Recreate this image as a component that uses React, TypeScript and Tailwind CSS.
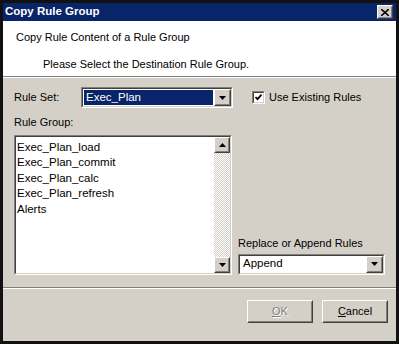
import React from 'react';

const font = { fontFamily: '"Liberation Sans", Arial, sans-serif' };

const ArrowDown = () => (
  <svg width="7" height="4" viewBox="0 0 7 4">
    <path d="M0 0h7L3.5 4z" fill="#000" />
  </svg>
);

const ArrowUp = () => (
  <svg width="7" height="4" viewBox="0 0 7 4">
    <path d="M0 4h7L3.5 0z" fill="#000" />
  </svg>
);

// classic raised 3d button face
const Raised = ({ className, children }: { className?: string; children?: React.ReactNode }) => (
  <div className={`border border-t-white border-l-white border-r-[#404040] border-b-[#404040] bg-[#d4d0c8] ${className ?? ''}`}>
    <div className="flex h-full w-full items-center justify-center border border-t-[#d4d0c8] border-l-[#d4d0c8] border-r-[#808080] border-b-[#808080]">
      {children}
    </div>
  </div>
);

// sunken field frame
const Sunken = ({ className, children }: { className?: string; children?: React.ReactNode }) => (
  <div className={`border border-t-[#808080] border-l-[#808080] border-r-white border-b-white ${className ?? ''}`}>
    <div className="h-full w-full border border-t-[#404040] border-l-[#404040] border-r-[#d4d0c8] border-b-[#d4d0c8] bg-white">
      {children}
    </div>
  </div>
);

const Combo = ({ value, selected, className }: { value: string; selected?: boolean; className?: string }) => (
  <Sunken className={className}>
    <div className="flex h-full items-center">
      <div className="flex h-full flex-1 items-center p-px">
        <span
          className={`flex h-full flex-1 items-center pl-[2px] text-[11.5px] ${selected ? 'bg-[#0a246a] text-white' : 'text-black'}`}
        >
          {value}
        </span>
      </div>
      <Raised className="h-[17px] w-[17px]">
        <ArrowDown />
      </Raised>
    </div>
  </Sunken>
);

const ruleGroups = ['Exec_Plan_load', 'Exec_Plan_commit', 'Exec_Plan_calc', 'Exec_Plan_refresh', 'Alerts'];

export default function App() {
  return (
    <div style={font} className="flex h-[344px] w-[399px] flex-col border-[3px] border-[#111] bg-[#d4d0c8] text-black">
      {/* title bar */}
      <div className="flex h-[18px] items-center justify-between bg-[#0a246a] pl-[2px] pr-[3px]">
        <span className="text-[11.5px] font-bold text-white">Copy Rule Group</span>
        <Raised className="h-[14px] w-[16px]">
          <svg width="8" height="7" viewBox="0 0 8 7">
            <path d="M0 0l8 7M8 0L0 7" stroke="#000" strokeWidth="1.6" />
          </svg>
        </Raised>
      </div>

      {/* header */}
      <div className="flex h-[55px] flex-col bg-white pl-[13px] pt-[8px] text-[11px]">
        <span>Copy Rule Content of a Rule Group</span>
        <span className="mt-[10px] pl-[27px]">Please Select the Destination Rule Group.</span>
      </div>
      <div className="h-px bg-[#808080]" />
      <div className="h-px bg-white" />

      {/* body */}
      <div className="flex flex-1 flex-col px-[11px] pt-[9px] text-[11px]">
        <div className="flex items-center">
          <span className="w-[67px]">Rule Set:</span>
          <Combo value="Exec_Plan" selected className="h-[21px] w-[152px]" />
          <div className="ml-[19px] flex items-center">
            <Sunken className="h-[13px] w-[13px]">
              <svg width="9" height="9" viewBox="0 0 9 9" className="block">
                <path d="M1.5 4l2 2.2 4-4.5" stroke="#000" strokeWidth="1.8" fill="none" />
              </svg>
            </Sunken>
            <span className="ml-[4px]">Use Existing Rules</span>
          </div>
        </div>

        <span className="mt-[6px]">Rule Group:</span>

        <div className="mt-[4px] flex">
          <Sunken className="h-[140px] w-[220px]">
            <div className="flex h-full">
              <div className="flex flex-1 flex-col pl-[1px] pt-[3px] text-[11.5px] leading-[15.5px]">
                {ruleGroups.map((g) => (
                  <span key={g}>{g}</span>
                ))}
              </div>
              <div className="flex w-[16px] flex-col bg-[repeating-conic-gradient(#ffffff_0_25%,#d4d0c8_0_50%)] bg-[length:2px_2px]">
                <Raised className="h-[16px] w-[16px]">
                  <ArrowUp />
                </Raised>
                <div className="flex-1" />
                <Raised className="h-[16px] w-[16px]">
                  <ArrowDown />
                </Raised>
              </div>
            </div>
          </Sunken>

          <div className="ml-[6px] flex flex-1 flex-col justify-end">
            <span className="mb-[2px]">Replace or Append Rules</span>
            <Combo value="Append" className="h-[21px] w-[147px]" />
          </div>
        </div>
      </div>

      {/* footer */}
      <div className="h-px bg-[#808080]" />
      <div className="h-px bg-white" />
      <div className="flex h-[52px] items-start justify-end gap-[9px] pr-[8px] pt-[11px] text-[11px]">
        <Raised className="h-[23px] w-[66px]">
          <span className="text-[#808080] [text-shadow:1px_1px_0_#fff]">
            <span className="underline">O</span>K
          </span>
        </Raised>
        <Raised className="h-[23px] w-[66px]">
          <span>
            <span className="underline">C</span>ancel
          </span>
        </Raised>
      </div>
    </div>
  );
}
